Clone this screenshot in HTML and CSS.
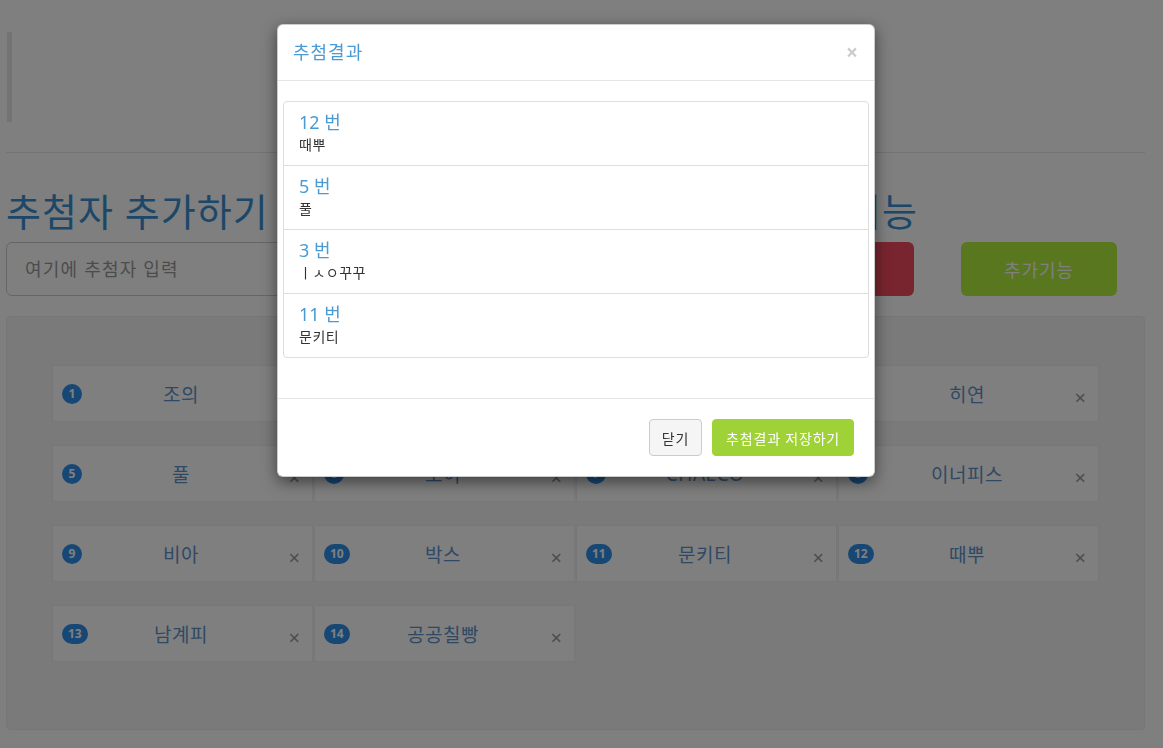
FILE: index.html
```html
<!DOCTYPE html>
<html lang="ko">
<head>
  <meta charset="UTF-8">
  <meta name="viewport" content="width=device-width, initial-scale=1.0">
  <title>추첨</title>
  <link rel="stylesheet" href="styles.css">
</head>
<body>

  <div class="page">

    <blockquote class="intro"></blockquote>

    <hr class="divider">

    <div class="controls">
      <h1 class="title">추첨자 추가하기</h1>
      <h1 class="title title-side">추가기능</h1>
      <input class="entry" type="text" placeholder="여기에 추첨자 입력">
      <button class="btn btn-red">추첨하기</button>
      <button class="btn btn-green">추가기능</button>
    </div>

    <div class="well">
      <div class="cards">
        <div class="card"><span class="badge">1</span><span class="name">조의</span><span class="remove">&times;</span></div>
        <div class="card"><span class="badge">2</span><span class="name">하늘</span><span class="remove">&times;</span></div>
        <div class="card"><span class="badge">3</span><span class="name">ㅣㅅㅇ꾸꾸</span><span class="remove">&times;</span></div>
        <div class="card"><span class="badge">4</span><span class="name">히연</span><span class="remove">&times;</span></div>
        <div class="card"><span class="badge">5</span><span class="name">풀</span><span class="remove">&times;</span></div>
        <div class="card"><span class="badge">6</span><span class="name">조이</span><span class="remove">&times;</span></div>
        <div class="card"><span class="badge">7</span><span class="name">CHAECO</span><span class="remove">&times;</span></div>
        <div class="card"><span class="badge">8</span><span class="name">이너피스</span><span class="remove">&times;</span></div>
        <div class="card"><span class="badge">9</span><span class="name">비아</span><span class="remove">&times;</span></div>
        <div class="card"><span class="badge">10</span><span class="name">박스</span><span class="remove">&times;</span></div>
        <div class="card"><span class="badge">11</span><span class="name">문키티</span><span class="remove">&times;</span></div>
        <div class="card"><span class="badge">12</span><span class="name">때뿌</span><span class="remove">&times;</span></div>
        <div class="card"><span class="badge">13</span><span class="name">남계피</span><span class="remove">&times;</span></div>
        <div class="card"><span class="badge">14</span><span class="name">공공칠빵</span><span class="remove">&times;</span></div>
      </div>
    </div>

  </div>

  <!-- 모달 -->
  <div class="backdrop"></div>

  <div class="modal">
    <div class="modal-header">
      <h4 class="modal-title">추첨결과</h4>
      <span class="close">&times;</span>
    </div>
    <div class="modal-body">
      <div class="result-list">
        <div class="result">
          <h4 class="result-num">12 번</h4>
          <p class="result-name">때뿌</p>
        </div>
        <div class="result">
          <h4 class="result-num">5 번</h4>
          <p class="result-name">풀</p>
        </div>
        <div class="result">
          <h4 class="result-num">3 번</h4>
          <p class="result-name">ㅣㅅㅇ꾸꾸</p>
        </div>
        <div class="result">
          <h4 class="result-num">11 번</h4>
          <p class="result-name">문키티</p>
        </div>
      </div>
    </div>
    <div class="modal-footer">
      <button class="mbtn mbtn-default">닫기</button>
      <button class="mbtn mbtn-save">추첨결과 저장하기</button>
    </div>
  </div>

</body>
</html>
```

FILE: styles.css
```css
body {
  margin: 0;
  background: #fff;
  color: #333;
  font-family: "Noto Sans", "Noto Sans CJK KR", sans-serif;
  font-size: 14px;
}

.page {
  padding: 0 18px 20px 6px;
}

.intro {
  margin: 32px 0 0 1px;
  height: 90px;
  border-left: 5px solid #e6e6e6;
}

.divider {
  margin: 30px 0 0;
  border: 0;
  border-top: 1px solid #e6e6e6;
}

/* 입력 영역 */
.controls {
  display: grid;
  grid-template-columns: 705px 156px 156px;
  column-gap: 47px;
  align-items: center;
}

.title {
  margin: 38px 0 10px;
  font-size: 38px;
  line-height: 41px;
  letter-spacing: 1px;
  font-weight: normal;
  color: #3a8fd0;
  white-space: nowrap;
}

.title-side {
  grid-column: 2 / 4;
  padding-left: 16px;
}

.entry {
  height: 54px;
  box-sizing: border-box;
  padding: 0 18px;
  border: 1px solid #ccc;
  border-radius: 6px;
  font-family: inherit;
  font-size: 18px;
  letter-spacing: 1.2px;
  color: #555;
}

.entry::placeholder {
  color: #999;
}

.btn {
  height: 54px;
  border: 0;
  border-radius: 6px;
  font-family: inherit;
  font-size: 18px;
  letter-spacing: 1px;
  color: #fff;
}

.btn-red {
  background: #f24a5e;
}

.btn-green {
  background: #b0ee3c;
}

/* 추첨자 목록 */
.well {
  margin-top: 20px;
  padding: 48px 45px 67px;
  background: #f4f4f4;
  border: 1px solid #ececec;
  border-radius: 4px;
}

.cards {
  display: grid;
  grid-template-columns: repeat(4, 1fr);
  column-gap: 1px;
  row-gap: 23px;
}

.card {
  height: 57px;
  box-sizing: border-box;
  display: grid;
  grid-template-columns: 1fr auto 1fr;
  align-items: center;
  padding: 0 12px 0 9px;
  background: #fff;
  border: 1px solid #efefef;
}

.badge {
  justify-self: start;
  min-width: 20px;
  height: 20px;
  box-sizing: border-box;
  padding: 0 6px;
  border-radius: 10px;
  background: #2f8ee8;
  color: #fff;
  font-size: 12px;
  font-weight: bold;
  line-height: 20px;
  text-align: center;
}

.name {
  font-size: 19px;
  letter-spacing: 0.5px;
  color: #5f93c8;
}

.remove {
  justify-self: end;
  margin-top: 8px;
  font-size: 20px;
  line-height: 1;
  color: #999;
}

/* 모달 */
.backdrop {
  position: fixed;
  left: 0;
  top: 0;
  right: 0;
  bottom: 0;
  background: rgba(0, 0, 0, 0.5);
}

.modal {
  position: fixed;
  left: 277px;
  top: 24px;
  width: 598px;
  box-sizing: border-box;
  background: #fff;
  border: 1px solid rgba(0, 0, 0, 0.2);
  border-radius: 6px;
  box-shadow: 0 5px 15px rgba(0, 0, 0, 0.5);
}

.modal-header {
  display: flex;
  justify-content: space-between;
  align-items: center;
  padding: 15px;
  border-bottom: 1px solid #e5e5e5;
}

.modal-title {
  margin: 0;
  font-size: 18px;
  line-height: 25px;
  letter-spacing: 1px;
  font-weight: normal;
  color: #4a9bd3;
}

.close {
  margin-right: 1px;
  font-size: 21px;
  font-weight: bold;
  line-height: 1;
  color: #000;
  opacity: 0.2;
}

.modal-body {
  padding: 20px 5px;
}

.result-list {
  margin-bottom: 20px;
  border: 1px solid #ddd;
  border-radius: 4px;
}

.result {
  padding: 10px 15px;
  border-bottom: 1px solid #ddd;
}

.result:last-child {
  border-bottom: 0;
}

.result-num {
  margin: 0 0 3px;
  font-size: 18px;
  line-height: 20px;
  font-weight: normal;
  color: #4a9bd3;
}

.result-name {
  margin: 0;
  font-size: 14px;
  line-height: 20px;
  letter-spacing: 0.5px;
  color: #333;
}

.modal-footer {
  display: flex;
  justify-content: flex-end;
  gap: 10px;
  padding: 20px;
  border-top: 1px solid #e5e5e5;
}

.mbtn {
  height: 37px;
  padding: 0 12px;
  border: 1px solid #ccc;
  border-radius: 4px;
  font-family: inherit;
  font-size: 14px;
  letter-spacing: 0.8px;
}

.mbtn-default {
  background: #f5f5f5;
  color: #333;
}

.mbtn-save {
  padding: 0 13px;
  background: #9fd236;
  border-color: #9fd236;
  color: #fff;
}
```
